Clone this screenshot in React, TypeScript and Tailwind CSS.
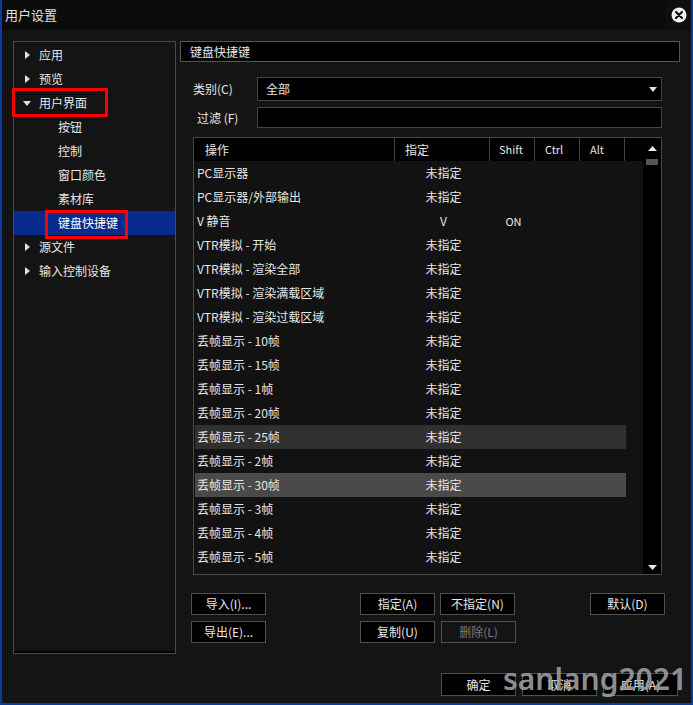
import React from "react";

const font = { fontFamily: '"Noto Sans CJK SC", "Noto Sans", sans-serif' };

const tree = [
  { label: "应用", level: 0, arrow: "right" },
  { label: "预览", level: 0, arrow: "right" },
  { label: "用户界面", level: 0, arrow: "down", boxed: true },
  { label: "按钮", level: 1 },
  { label: "控制", level: 1 },
  { label: "窗口颜色", level: 1 },
  { label: "素材库", level: 1 },
  { label: "键盘快捷键", level: 1, selected: true, boxed: true },
  { label: "源文件", level: 0, arrow: "right" },
  { label: "输入控制设备", level: 0, arrow: "right" },
];

const rows = [
  { name: "PC显示器", key: "未指定" },
  { name: "PC显示器/外部输出", key: "未指定" },
  { name: "V 静音", key: "V", shift: "ON" },
  { name: "VTR模拟 - 开始", key: "未指定" },
  { name: "VTR模拟 - 渲染全部", key: "未指定" },
  { name: "VTR模拟 - 渲染满载区域", key: "未指定" },
  { name: "VTR模拟 - 渲染过载区域", key: "未指定" },
  { name: "丢帧显示 - 10帧", key: "未指定" },
  { name: "丢帧显示 - 15帧", key: "未指定" },
  { name: "丢帧显示 - 1帧", key: "未指定" },
  { name: "丢帧显示 - 20帧", key: "未指定" },
  { name: "丢帧显示 - 25帧", key: "未指定", hl: "bg-[#303030]" },
  { name: "丢帧显示 - 2帧", key: "未指定" },
  { name: "丢帧显示 - 30帧", key: "未指定", hl: "bg-[#4a4a4a]" },
  { name: "丢帧显示 - 3帧", key: "未指定" },
  { name: "丢帧显示 - 4帧", key: "未指定" },
  { name: "丢帧显示 - 5帧", key: "未指定" },
];

const Btn = ({ children, disabled = false, className = "" }: { children: React.ReactNode; disabled?: boolean; className?: string }) => (
  <div
    className={`flex h-[22px] w-[75px] items-center justify-center border border-[#4f4f4f] text-[12px] ${
      disabled ? "bg-[#141414] text-[#7a7a7a]" : "bg-black text-[#e8e8e8]"
    } ${className}`}
  >
    {children}
  </div>
);

const TriRight = () => (
  <svg width="5" height="8" viewBox="0 0 5 8">
    <path d="M0 0 L5 4 L0 8 Z" fill="#e0e0e0" />
  </svg>
);

const TriDown = () => (
  <svg width="8" height="5" viewBox="0 0 8 5">
    <path d="M0 0 L8 0 L4 5 Z" fill="#e0e0e0" />
  </svg>
);

export default function App() {
  return (
    <div
      className="relative flex h-[705px] w-[693px] flex-col border-x-2 border-b-2 border-[#0a3c9e] bg-[#141414] text-[#e6e6e6]"
      style={font}
    >
      {/* title bar */}
      <div className="flex h-[30px] shrink-0 items-center bg-[#0b0b0b]">
        <div className="flex-1 pl-[3px] text-[13px] text-[#e0e0e0]">用户设置</div>
        <div className="flex h-full w-[25px] items-center justify-center bg-[#0e0e0e]">
          <svg width="16" height="16" viewBox="0 0 16 16">
            <circle cx="8" cy="8" r="7.5" fill="#f2f2f2" />
            <path d="M5 5 L11 11 M11 5 L5 11" stroke="#111" strokeWidth="2.2" strokeLinecap="round" />
          </svg>
        </div>
      </div>

      <div className="flex pl-[11px] pt-[11px]">
        {/* left tree */}
        <div className="h-[613px] w-[163px] border border-[#4a4a4a] pt-px shadow-[inset_0_-2px_0_#000]">
          {tree.map((t) => (
            <div
              key={t.label}
              className={`flex h-[24px] items-center text-[12px] ${t.selected ? "bg-[#082a8c] text-white" : ""}`}
            >
              {t.level === 0 ? (
                <>
                  <div className="flex w-[25px] items-center justify-center pl-[1px]">
                    {t.arrow === "down" ? <TriDown /> : <TriRight />}
                  </div>
                  <span>{t.label}</span>
                </>
              ) : (
                <span className="ml-[44px]">{t.label}</span>
              )}
            </div>
          ))}
        </div>

        {/* right content */}
        <div className="ml-[4px] flex w-[500px] flex-col">
          <div className="flex h-[21px] items-center border border-[#555] bg-black pl-[9px] text-[12px]">键盘快捷键</div>

          <div className="mt-[15px] flex items-center pl-[13px]">
            <span className="w-[64px] text-[12px]">类别(C)</span>
            <div className="flex h-[24px] w-[405px] items-center justify-between border border-[#444] bg-black pl-[8px] pr-[4px] text-[12px]">
              <span>全部</span>
              <svg width="8" height="5" viewBox="0 0 8 5">
                <path d="M0 0 L8 0 L4 5 Z" fill="#e0e0e0" />
              </svg>
            </div>
          </div>

          <div className="mt-[6px] flex items-center pl-[17px]">
            <span className="w-[60px] text-[12px]">过滤 (F)</span>
            <div className="h-[21px] w-[405px] border border-[#444] bg-black" />
          </div>

          {/* table */}
          <div className="ml-[13px] mt-[9px] flex h-[438px] w-[469px] flex-col border border-[#4a4a4a] bg-black">
            <div className="flex h-[23px] shrink-0 text-[12px]">
              <div className="flex w-[201px] items-center border-r border-[#444] pl-[11px]">操作</div>
              <div className="flex w-[95px] items-center border-r border-[#444] pl-[10px]">指定</div>
              <div className="flex w-[45px] items-center border-r border-[#444] pl-[9px] text-[11px]">Shift</div>
              <div className="flex w-[45px] items-center border-r border-[#444] pl-[10px] text-[11px]">Ctrl</div>
              <div className="flex w-[45px] items-center border-r border-[#444] pl-[10px] text-[11px]">Alt</div>
              <div className="w-[18px]" />
              <div className="flex flex-1 items-start justify-center pt-[8px]">
                <svg width="9" height="5" viewBox="0 0 9 5">
                  <path d="M4.5 0 L9 5 L0 5 Z" fill="#e8e8e8" />
                </svg>
              </div>
            </div>
            <div className="flex min-h-0 flex-1">
              <div className="w-[449px] bg-[#121212] pl-px">
                {rows.map((r) => (
                  <div key={r.name} className={`flex h-[24px] w-[431px] items-center text-[12px] ${r.hl ?? ""}`}>
                    <div className="w-[201px] pl-[2px]">{r.name}</div>
                    <div className="w-[95px] text-center">{r.key}</div>
                    <div className="w-[45px] text-center text-[11px]">{r.shift ?? ""}</div>
                  </div>
                ))}
              </div>
              <div className="flex flex-1 flex-col items-center justify-between pb-[4px]">
                <div className="-mt-[2px] h-[6px] w-[12px] bg-[#555]" />
                <svg width="9" height="5" viewBox="0 0 9 5">
                  <path d="M0 0 L9 0 L4.5 5 Z" fill="#e8e8e8" />
                </svg>
              </div>
            </div>
          </div>

          {/* action buttons */}
          <div className="ml-[11px] mt-[18px] flex">
            <Btn>导入(I)...</Btn>
            <Btn className="ml-[94px]">指定(A)</Btn>
            <Btn className="ml-[5px]">不指定(N)</Btn>
            <Btn className="ml-[75px]">默认(D)</Btn>
          </div>
          <div className="ml-[11px] mt-[6px] flex">
            <Btn>导出(E)...</Btn>
            <Btn className="ml-[94px]">复制(U)</Btn>
            <Btn disabled className="ml-[6px]">删除(L)</Btn>
          </div>
        </div>
      </div>

      {/* dialog buttons */}
      <div className="mt-[19px] flex pl-[439px]">
        <Btn className="h-[23px]">确定</Btn>
        <Btn className="ml-[6px] h-[23px]">取消</Btn>
        <Btn className="ml-[6px] h-[23px]">应用(A)</Btn>
      </div>

      {/* red annotation boxes */}
      <div className="pointer-events-none absolute left-[10px] top-[88px] h-[29px] w-[96px] border-[3px] border-[#ff0000]" />
      <div className="pointer-events-none absolute left-[43px] top-[210px] h-[29px] w-[83px] border-[3px] border-[#ff0000]" />

      {/* watermark */}
      <div
        className="pointer-events-none absolute left-[501px] top-[664px] text-[30px] font-semibold leading-none text-[#a0a0a0]/90"
        style={{ fontFamily: '"Noto Sans", sans-serif' }}
      >
        sanlang2021
      </div>
    </div>
  );
}
